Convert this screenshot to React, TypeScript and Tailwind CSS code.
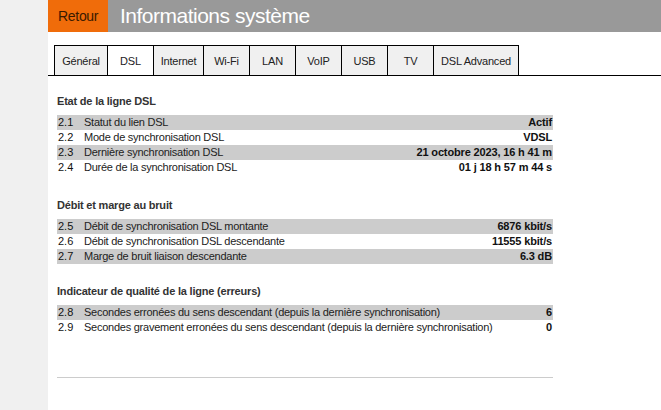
const tabs = ["Général", "DSL", "Internet", "Wi-Fi", "LAN", "VoIP", "USB", "TV", "DSL Advanced"];
const tabWidths = ["w-[54px]", "w-[46px]", "w-[50px]", "w-[46px]", "w-[46px]", "w-[46px]", "w-[46px]", "w-[46px]", "w-[85px]"];

type Row = { n: string; label: string; value: string };

const sections: { title: string; cls: string; rows: Row[] }[] = [
  {
    title: "Etat de la ligne DSL",
    cls: "mt-[18px]",
    rows: [
      { n: "2.1", label: "Statut du lien DSL", value: "Actif" },
      { n: "2.2", label: "Mode de synchronisation DSL", value: "VDSL" },
      { n: "2.3", label: "Dernière synchronisation DSL", value: "21 octobre 2023, 16 h 41 m" },
      { n: "2.4", label: "Durée de la synchronisation DSL", value: "01 j 18 h 57 m 44 s" },
    ],
  },
  {
    title: "Débit et marge au bruit",
    cls: "mt-[23px]",
    rows: [
      { n: "2.5", label: "Débit de synchronisation DSL montante", value: "6876 kbit/s" },
      { n: "2.6", label: "Débit de synchronisation DSL descendante", value: "11555 kbit/s" },
      { n: "2.7", label: "Marge de bruit liaison descendante", value: "6.3 dB" },
    ],
  },
  {
    title: "Indicateur de qualité de la ligne (erreurs)",
    cls: "mt-[20px]",
    rows: [
      { n: "2.8", label: "Secondes erronées du sens descendant (depuis la dernière synchronisation)", value: "6" },
      { n: "2.9", label: "Secondes gravement erronées du sens descendant (depuis la dernière synchronisation)", value: "0" },
    ],
  },
];

function Section({ title, cls, rows }: { title: string; cls: string; rows: Row[] }) {
  return (
    <div className={cls}>
      <div className="h-[14px] leading-[14px] font-bold text-[11px] tracking-[-0.2px] text-[#333]">{title}</div>
      <div className="mt-[7px]">
        {rows.map((r, i) => (
          <div
            key={r.n}
            className={`flex items-center h-[15px] text-[11px] ${i % 2 === 0 ? "bg-[#cccccc]" : "bg-white"}`}
          >
            <span className="w-[27px] pl-[1px] text-[#111]">{r.n}</span>
            <span className="flex-1 tracking-[-0.25px] text-[#222]">{r.label}</span>
            <span className="font-bold tracking-[-0.15px] text-[#111] pr-[1px]">{r.value}</span>
          </div>
        ))}
      </div>
    </div>
  );
}

export default function App() {
  return (
    <div className="flex w-[661px] h-[410px] overflow-hidden bg-white font-['Liberation_Sans',Arial,sans-serif]">
      <div className="w-[48px] shrink-0 bg-[#f0f0f0]" />
      <div className="flex-1 flex flex-col">
        <div className="flex h-[32px] bg-[#999999]">
          <div className="w-[60px] bg-[#f06c0a] flex items-center pl-[10px] text-[14px] tracking-[-0.3px] text-[#3a1a00]">Retour</div>
          <div className="pl-[12px] flex items-center text-[21px] tracking-[-0.5px] text-white">Informations système</div>
        </div>
        <div className="mt-[13px] flex border-b border-black pl-[6px]">
          {tabs.map((t, i) => (
            <div
              key={t}
              className={`${tabWidths[i]} h-[30px] pt-[2px] flex items-center justify-center text-[11px] tracking-[-0.2px] text-[#222] border-t border-r border-black ${i === 0 ? "border-l" : ""} ${t === "DSL" ? "bg-white" : "bg-[#f0f0f0]"}`}
            >
              {t}
            </div>
          ))}
        </div>
        <div className="w-[496px] ml-[9px]">
          {sections.map((s) => (
            <Section key={s.title} {...s} />
          ))}
          <div className="mt-[42px] border-t border-[#cccccc]" />
        </div>
      </div>
    </div>
  );
}
